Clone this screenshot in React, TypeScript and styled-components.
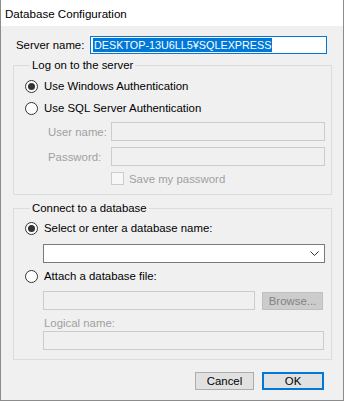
import styled, { createGlobalStyle } from "styled-components";

/**
 * Page defaults
 */
const GlobalStyle = createGlobalStyle`
  html, body {
    margin: 0;
    padding: 0;
    background: #f0f0f0;
  }
  body {
    font-family: "Liberation Sans", Arial, sans-serif;
    font-size: 11.4px;
    color: #000;
  }
`;

const Window = styled.div`
  box-sizing: border-box;
  width: 344px;
  height: 401px;
  border: 1px solid #8c8c8c;
  border-top: none;
  background: #f0f0f0;
  display: flex;
  flex-direction: column;
`;

const TitleBar = styled.div`
  height: 26px;
  background: #fff;
  display: flex;
  align-items: center;
  padding-left: 4px;
  font-size: 11.6px;
`;

const Content = styled.div`
  padding: 10px 11px 0 12px;
  display: flex;
  flex-direction: column;
`;

const ServerRow = styled.div`
  display: flex;
  align-items: center;
  height: 18px;
  padding-left: 3px;
`;

const ServerLabel = styled.span`
  width: 74px;
`;

const ServerInput = styled.div`
  box-sizing: border-box;
  width: 237px;
  height: 18px;
  border: 1px solid #0078d7;
  background: #fff;
  display: flex;
  align-items: center;
  padding-left: 2px;
`;

const Selected = styled.span`
  background: #0078d7;
  color: #fff;
  font-size: 10.8px;
  line-height: 14px;
  padding: 0 1px;
`;

const Group = styled.fieldset<{ $top: number; $bottom: number }>`
  margin: ${(p) => p.$top}px 0 0 0;
  padding: 0 0 ${(p) => p.$bottom}px 11px;
  border: 1px solid #dcdcdc;
  min-width: 0;
  display: flex;
  flex-direction: column;
`;

const Legend = styled.legend`
  margin-left: 5px;
  padding: 0 2px;
  line-height: 14px;
`;

const RadioRow = styled.label<{ $top: number }>`
  display: flex;
  align-items: center;
  gap: 6px;
  height: 16px;
  margin-top: ${(p) => p.$top}px;
`;

const RadioCircle = styled.span<{ $checked?: boolean }>`
  box-sizing: border-box;
  width: 13px;
  height: 13px;
  border-radius: 50%;
  border: 1px solid #333;
  background: #fff;
  display: flex;
  align-items: center;
  justify-content: center;
  &::after {
    content: "";
    width: 7px;
    height: 7px;
    border-radius: 50%;
    background: ${(p) => (p.$checked ? "#333" : "transparent")};
  }
`;

const FieldRow = styled.div<{ $top: number }>`
  display: flex;
  align-items: center;
  margin-top: ${(p) => p.$top}px;
`;

const DimLabel = styled.span<{ $width?: number; $indent?: number }>`
  box-sizing: border-box;
  color: #a0a0a0;
  width: ${(p) => (p.$width ? `${p.$width}px` : "auto")};
  padding-left: ${(p) => p.$indent ?? 0}px;
  line-height: 14px;
`;

const TextBox = styled.div<{ $width: number; $enabled?: boolean }>`
  box-sizing: border-box;
  width: ${(p) => p.$width}px;
  height: 19px;
  border: 1px solid ${(p) => (p.$enabled ? "#7a7a7a" : "#cccccc")};
  background: ${(p) => (p.$enabled ? "#fff" : "#f0f0f0")};
`;

const Combo = styled(TextBox)`
  display: flex;
  align-items: center;
  justify-content: flex-end;
  padding-right: 5px;
`;

const CheckRow = styled.label`
  display: flex;
  align-items: center;
  gap: 5px;
  margin-top: 5px;
  padding-left: 86px;
  height: 15px;
`;

const CheckBox = styled.span`
  box-sizing: border-box;
  width: 13px;
  height: 13px;
  border: 1px solid #cccccc;
  background: #f7f7f7;
`;

const Indent = styled.div`
  padding-left: 18px;
  display: flex;
  flex-direction: column;
`;

const Button = styled.button<{ $width: number; $primary?: boolean; $disabled?: boolean }>`
  box-sizing: border-box;
  width: ${(p) => p.$width}px;
  height: 18px;
  margin: 0;
  padding: 0;
  font-family: inherit;
  font-size: 11.4px;
  color: ${(p) => (p.$disabled ? "#838383" : "#000")};
  background: ${(p) => (p.$disabled ? "#cccccc" : "#e1e1e1")};
  border: ${(p) =>
    p.$primary ? "2px solid #0078d7" : p.$disabled ? "1px solid #bfbfbf" : "1px solid #adadad"};
  border-radius: 0;
`;

const ButtonBar = styled.div`
  display: flex;
  justify-content: flex-end;
  gap: 8px;
  margin-top: 12px;
  margin-right: 8px;
`;

function Radio({ checked, top, children }: { checked?: boolean; top: number; children: string }) {
  return (
    <RadioRow $top={top}>
      <RadioCircle $checked={checked} />
      <span>{children}</span>
    </RadioRow>
  );
}

export default function App() {
  return (
    <>
      <GlobalStyle />
      <Window>
        <TitleBar>Database Configuration</TitleBar>
        <Content>
          <ServerRow>
            <ServerLabel>Server name:</ServerLabel>
            <ServerInput>
              <Selected>DESKTOP-13U6LL5¥SQLEXPRESS</Selected>
            </ServerInput>
          </ServerRow>

          <Group $top={4} $bottom={8}>
            <Legend>Log on to the server</Legend>
            <Radio checked top={6}>
              Use Windows Authentication
            </Radio>
            <Radio top={6}>Use SQL Server Authentication</Radio>
            <FieldRow $top={6}>
              <DimLabel $width={86} $indent={23}>
                User name:
              </DimLabel>
              <TextBox $width={214} />
            </FieldRow>
            <FieldRow $top={6}>
              <DimLabel $width={86} $indent={23}>
                Password:
              </DimLabel>
              <TextBox $width={214} />
            </FieldRow>
            <CheckRow>
              <CheckBox />
              <DimLabel>Save my password</DimLabel>
            </CheckRow>
          </Group>

          <Group $top={6} $bottom={9}>
            <Legend>Connect to a database</Legend>
            <Radio checked top={5}>
              Select or enter a database name:
            </Radio>
            <Indent>
              <FieldRow $top={8}>
                <Combo $width={282} $enabled>
                  <svg width="9" height="6" viewBox="0 0 9 6">
                    <path d="M0.5 0.5 L4.5 4.5 L8.5 0.5" fill="none" stroke="#333" strokeWidth="1" />
                  </svg>
                </Combo>
              </FieldRow>
            </Indent>
            <Radio top={5}>Attach a database file:</Radio>
            <Indent>
              <FieldRow $top={7} style={{ gap: 7 }}>
                <TextBox $width={212} />
                <Button $width={61} $disabled>
                  Browse...
                </Button>
              </FieldRow>
              <FieldRow $top={6}>
                <DimLabel $indent={1}>Logical name:</DimLabel>
              </FieldRow>
              <FieldRow $top={1}>
                <TextBox $width={281} />
              </FieldRow>
            </Indent>
          </Group>

          <ButtonBar>
            <Button $width={59}>Cancel</Button>
            <Button $width={62} $primary>
              OK
            </Button>
          </ButtonBar>
        </Content>
      </Window>
    </>
  );
}
